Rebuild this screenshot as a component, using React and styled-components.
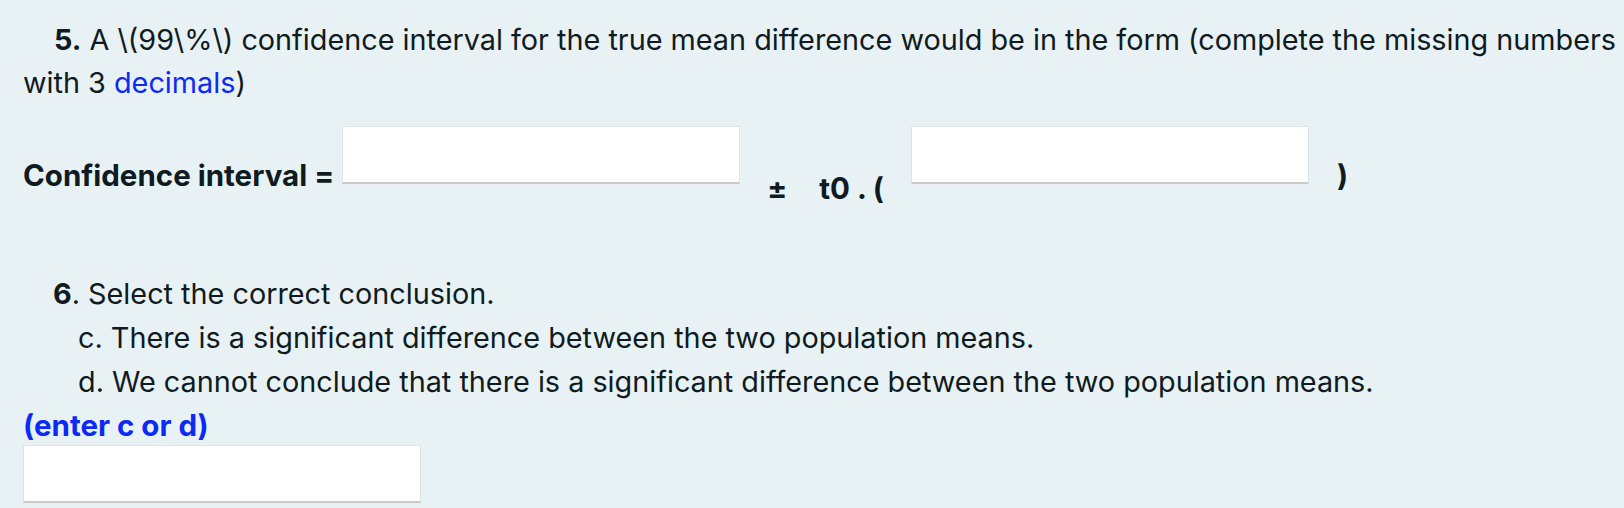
import React from "react";
import styled, { createGlobalStyle } from "styled-components";

const GlobalStyle = createGlobalStyle`
  html, body {
    margin: 0;
    padding: 0;
    background: #e8f1f4;
  }
  body {
    font-family: Inter, "Noto Sans", "Liberation Sans", sans-serif;
    color: #0f1b20;
    font-size: 28.8px;
  }
`;

const Page = styled.div`
  width: 1624px;
  height: 508px;
  box-sizing: border-box;
  padding: 18px 0 0 23px;
  overflow: hidden;
`;

const Question = styled.p`
  margin: 0;
  line-height: 43px;
  text-indent: 31px;
  white-space: nowrap;
`;

const Num = styled.b`
  font-weight: 700;
`;

const Accent = styled.span`
  color: #0b2bf5;
`;

const IntervalRow = styled.div`
  display: flex;
  align-items: flex-start;
  margin-top: 22px;
  height: 84px;
`;

const Label = styled.span`
  font-weight: 700;
  font-size: 29.5px;
  line-height: 42px;
  margin-top: ${(p) => p.$drop || 0}px;
  margin-left: ${(p) => p.$left || 0}px;
  white-space: pre;
`;

const Field = styled.input`
  box-sizing: border-box;
  flex: none;
  display: block;
  width: ${(p) => p.$w || 398}px;
  height: 58px;
  margin: 0 0 0 ${(p) => p.$left || 0}px;
  padding: 0;
  background: #fff;
  border: 1px solid #dfe5e8;
  border-bottom: 2px solid #c7cbcd;
  border-radius: 0;
  outline: none;
  font: inherit;
`;

const Conclusion = styled.div`
  margin-top: 62px;
  line-height: 44px;
`;

const Prompt = styled.div`
  text-indent: 30px;
`;

const Option = styled.div`
  padding-left: 55px;
`;

const Hint = styled.div`
  color: #0b2bf5;
  font-weight: 700;
  font-size: 29.5px;
  line-height: 40px;
  margin-top: 1px;
`;

export default function App() {
  return (
    <>
      <GlobalStyle />
      <Page>
        <Question>
          <Num>5.</Num> A \(99\%\) confidence interval for the true mean difference would be in the form (complete the missing numbers
          <br />
          with 3 <Accent>decimals</Accent>)
        </Question>

        <IntervalRow>
          <Label $drop={28}>Confidence interval =</Label>
          <Field $left={8} />
          <Label $drop={41} $left={27}>±</Label>
          <Label $drop={41} $left={32}>t0 . (</Label>
          <Field $left={27} />
          <Label $drop={28} $left={28}>)</Label>
        </IntervalRow>

        <Conclusion>
          <Prompt>
            <Num>6</Num>. Select the correct conclusion.
          </Prompt>
          <Option>c. There is a significant difference between the two population means.</Option>
          <Option>d. We cannot conclude that there is a significant difference between the two population means.</Option>
          <Hint>(enter c or d)</Hint>
          <Field $w={398} />
        </Conclusion>
      </Page>
    </>
  );
}
